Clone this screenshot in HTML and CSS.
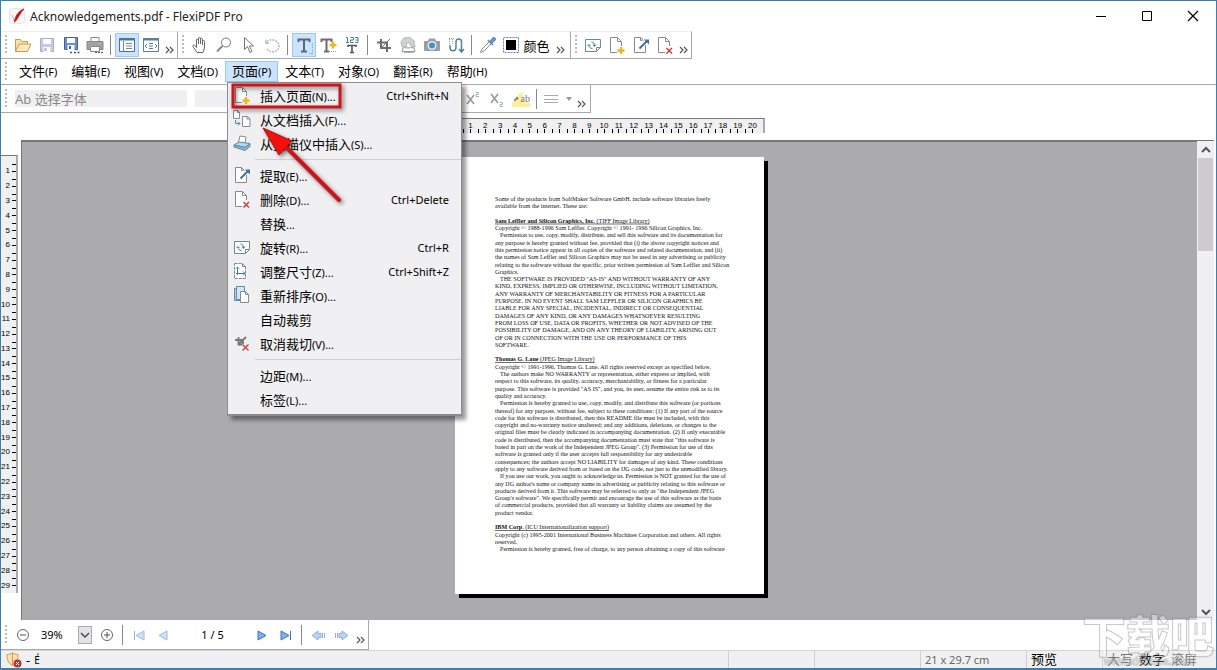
FILE: index.html
```html
<!DOCTYPE html>
<html lang="zh-CN">
<head>
    <meta charset="UTF-8">
    <meta name="viewport" content="width=device-width, initial-scale=1.0">
    <title>Acknowledgements.pdf - FlexiPDF Pro</title>
    <link rel="stylesheet" href="styles.css">
</head>
<body>
    <!-- Shared icons -->
    <svg class="icon-defs" aria-hidden="true">
        <symbol id="page-add" viewBox="0 0 18 18">
            <path d="M9 16.500H2.500V1.500h7l4 4V10" fill="#fff" stroke="#8a8a8a"/>
            <path d="M9.500 1.500v4h4" fill="none" stroke="#8a8a8a"/>
            <path d="M13 11v7M9.500 14.500h7" stroke="#e8b91c" stroke-width="2.400"/>
        </symbol>
        <symbol id="page-extract" viewBox="0 0 18 18">
            <path d="M13.500 9v7.500h-11v-15h6l3 3" fill="#fff" stroke="#8a8a8a"/>
            <path d="M8.500 1.500v3h2" fill="none" stroke="#8a8a8a"/>
            <path d="M7.500 12.500L15 5" stroke="#3f7196" stroke-width="2"/>
            <path d="M12 3.500h5v5z" fill="#3f7196"/>
        </symbol>
        <symbol id="page-delete" viewBox="0 0 18 18">
            <path d="M9 16.500H2.500V1.500h7l4 4V10" fill="#fff" stroke="#8a8a8a"/>
            <path d="M9.500 1.500v4h4" fill="none" stroke="#8a8a8a"/>
            <path d="M10.500 12l5.500 5.500M16 12l-5.500 5.500" stroke="#c94242" stroke-width="1.500"/>
        </symbol>
        <symbol id="rotate" viewBox="0 0 18 18">
            <path d="M1.500 3.500h15v8l-4 4h-11z" fill="#fff" stroke="#6f8a93"/>
            <path d="M12.500 15.500v-4h4" fill="none" stroke="#6f8a93"/>
            <path d="M5 9c0 2.500 1.500 3.500 3.500 3.500M10.500 10c0-2.500-1-4-3-4M3.500 10L5 8.500 6.500 10M9 8.500l1.500 2 1.500-2" fill="none" stroke="#3f7f96"/>
        </symbol>
        <symbol id="crop" viewBox="0 0 18 18">
            <path d="M6 3v9h10M2 6.500h10V16" fill="none" stroke="#6d6d6d" stroke-width="2"/>
            <path d="M6 12l9-9" stroke="#6d6d6d"/>
        </symbol>
        <symbol id="more" viewBox="0 0 10 8">
            <path d="M1 1l3 3-3 3M5 1l3 3-3 3" fill="none" stroke="#555" stroke-width="1.200"/>
        </symbol>
    </svg>

    <div class="window">
        <header class="titlebar">
            <svg class="app-icon" viewBox="0 0 16 16">
                <rect x="0.500" y="0.500" width="15" height="15" rx="3" fill="#f8f6f6" stroke="#e6e2e2"/>
                <path d="M2.500 7c1.500 2 2.500 4 3 7" fill="none" stroke="#d9a0a4"/>
                <path d="M15 1C10 3 6.500 7 5.500 14 8.500 12 10 6 15 1z" fill="#c1121f" stroke="#c1121f"/>
            </svg>
            <h1>Acknowledgements.pdf - FlexiPDF Pro</h1>
            <div class="window-buttons">
                <button aria-label="最小化"><svg viewBox="0 0 12 12"><path d="M1 6.500h10" stroke="#000"/></svg></button>
                <button aria-label="最大化"><svg viewBox="0 0 12 12"><path d="M1.500 1.500h9v9h-9z" fill="none" stroke="#000"/></svg></button>
                <button aria-label="关闭"><svg viewBox="0 0 12 12"><path d="M1 1l10 10M11 1L1 11" stroke="#000" stroke-width="1.200"/></svg></button>
            </div>
        </header>

        <div class="toolbars">
            <div class="toolbar">
                <span class="grip"></span>
                <button aria-label="打开"><svg viewBox="0 0 18 18"><path d="M1.500 15V3.500h5l1.500 2h5.500V8" fill="#f6e2b0" stroke="#c89b4e"/><path d="M1.500 15.500L5 8h12l-3.500 7.500z" fill="#fce9bd" stroke="#c89b4e"/></svg></button>
                <button aria-label="保存"><svg viewBox="0 0 18 18"><path d="M2.500 2.500h13v13h-13z" fill="#c3cbe3" stroke="#a7b0cf"/><path d="M5 3h8v5H5zM5.500 11h7v5h-7z" fill="#fff"/><path d="M6.500 12h2v3h-2z" fill="#a7b0cf"/></svg></button>
                <button aria-label="另存为"><svg viewBox="0 0 18 18"><path d="M2.500 1.500h13v12h-13z" fill="#6f8ccb" stroke="#4a5f96"/><path d="M5 2h8v5H5zM5.500 9h7v5h-7z" fill="#fff"/><path d="M7 10h2v3H7z" fill="#4a5f96"/><path d="M8 16.500h2M12 16.500h2M15.500 16.500h2" stroke="#555" stroke-width="1.500"/></svg></button>
                <button aria-label="打印"><svg viewBox="0 0 18 18"><path d="M5 1.500h8v4H5z" fill="#fff" stroke="#888"/><path d="M1 5.500h16v8H1z" fill="#a2a2a2" stroke="#888"/><path d="M4.500 10.500h9v5h-9z" fill="#fff" stroke="#888"/><path d="M13 7.500h2" stroke="#d9df54"/><path d="M9 16.500h2M12 16.500h2M15 16.500h2" stroke="#555"/></svg></button>
                <span class="divider"></span>
                <button class="active" aria-label="书签栏"><svg viewBox="0 0 18 18"><path d="M1.500 2.500h15v13h-15z" fill="#fff" stroke="#4d7591"/><path d="M1 3.500h16" stroke="#4d7591" stroke-width="2"/><path d="M5.500 5v10M8 7.500h6M8 10h6M8 12.500h6" stroke="#6b8ea6"/></svg></button>
                <button aria-label="适合宽度"><svg viewBox="0 0 18 18"><path d="M1.500 2.500h15v13h-15z" fill="#fff" stroke="#5f7f92"/><path d="M1 3.500h16" stroke="#5f7f92" stroke-width="2"/><path d="M7 7.500h4M7 10h4M7 12.500h4M5 8l-2 2 2 2M13 8l2 2-2 2" fill="none" stroke="#4a7fae"/></svg></button>
                <button class="more" aria-label="更多"><svg><use href="#more"/></svg></button>
            </div>
            <div class="toolbar">
                <span class="grip"></span>
                <button aria-label="手形"><svg viewBox="0 0 18 18"><path d="M6 16.500L2 10.500c-.5-1.500 1-2 2-1l1.500 2V4c0-1.500 2-1.500 2 0v4-5.500c0-1.500 2-1.500 2 0V8 3.500c0-1.500 2-1.500 2 0V9 5.500c0-1.500 2-1.500 2 0V12l-1.500 4.500z" fill="#fff" stroke="#666"/></svg></button>
                <button aria-label="缩放"><svg viewBox="0 0 18 18"><circle cx="11" cy="6.500" r="4.500" fill="#fff" stroke="#777"/><path d="M7.500 10L2 15.500" stroke="#888" stroke-width="2"/></svg></button>
                <button aria-label="选择"><svg viewBox="0 0 18 18"><path d="M5.500 1.500v12l3-3 2.500 6 2-1-2.500-5.500h4z" fill="#fff" stroke="#777"/></svg></button>
                <button aria-label="撤销"><svg viewBox="0 0 18 18"><path d="M4 6c4-5 12-1 12 4 0 6-8 8-12 3" fill="none" stroke="#b4b8bb" stroke-width="1.500" stroke-dasharray="2 1"/><path d="M2 3v5h5z" fill="#b3cbe2"/></svg></button>
                <span class="divider"></span>
                <button class="active" aria-label="编辑文本"><svg viewBox="0 0 18 18"><path d="M3.500 6V3.500h11V6M9 3v12M6 15.500h6" fill="none" stroke="#56697a" stroke-width="2"/><path d="M17.500 7v11M14 17.500h4" stroke="#7fa8cc" stroke-dasharray="1 1"/></svg></button>
                <button aria-label="添加文本"><svg viewBox="0 0 18 18"><path d="M2.500 6V3.500h10V6M7.500 3v12M5 15.500h5" fill="none" stroke="#6d6d6d" stroke-width="2"/><path d="M14 5.500v7M10.500 9h7" stroke="#e8b91c" stroke-width="2.400"/><path d="M10 15.500h7" stroke="#7fa8cc" stroke-dasharray="1 1"/></svg></button>
                <button aria-label="编号"><svg viewBox="0 0 18 18"><path d="M3 1.500h1.500v5M3 6.500h3M7.500 1.500h3v2.500h-3v2.500h3M12 1.500h3v5h-3M12.500 4H15" fill="none" stroke="#4a8199"/><path d="M5 11V9.500h8V11M9 9v7M7 16.500h4" fill="none" stroke="#555" stroke-width="1.600"/></svg></button>
                <span class="divider"></span>
                <button aria-label="裁剪"><svg><use href="#crop"/></svg></button>
                <button aria-label="图章"><svg viewBox="0 0 18 18"><path d="M3 11L2 6l3-4 6-.5 4 3.500 1 6-4-1-2-3.500-3 1 1 3.500z" fill="#cfd3d6" stroke="#b4b4b4"/><path d="M4 12c2-1 3 0 5 0s3-1 6 0l1 3.500H3z" fill="#fff" stroke="#999"/><path d="M5 16.500h10" stroke="#8dbad8"/></svg></button>
                <button aria-label="快照"><svg viewBox="0 0 18 18"><path d="M1 5h4l1-2.500h6L13 5h4v10H1z" fill="#9c9fa2"/><circle cx="9" cy="9.500" r="4.500" fill="#d8eaf5"/><circle cx="9" cy="9.500" r="3" fill="#4d90bd"/></svg></button>
                <button aria-label="连接"><svg viewBox="0 0 18 18"><path d="M3 9v2c0 5 6 5 6 0V6c0-4 5.500-4 5.500 0v9M12 13l2.500 3 2.500-3" fill="none" stroke="#5580a0" stroke-width="1.500"/><path d="M2 2.500h5M2.500 3v6M5.500 3v6" stroke="#7fa3bd" stroke-dasharray="1 1"/></svg></button>
                <span class="divider"></span>
                <button aria-label="吸管"><svg viewBox="0 0 18 18"><path d="M10 6L3 13l-1.500 3.500L5 15l7-7" fill="#fff" stroke="#8a8a8a"/><path d="M9 4l5 5M11 6l3-4c1-1 3 1 2 2l-4 3.500z" fill="#7c9fd0" stroke="#6688bd" stroke-width="1.600"/></svg></button>
                <button class="color-button"><svg viewBox="0 0 18 18"><path d="M1.500 1.500h15v15h-15z" fill="#fff" stroke="#5f83c4" stroke-dasharray="2 1"/><path d="M4 4h10v10H4z" fill="#000"/></svg><span>颜色</span></button>
                <button class="more wide" aria-label="更多"><svg><use href="#more"/></svg></button>
            </div>
            <div class="toolbar">
                <span class="grip"></span>
                <button aria-label="旋转页面"><svg><use href="#rotate"/></svg></button>
                <button aria-label="插入页面"><svg><use href="#page-add"/></svg></button>
                <button aria-label="提取页面"><svg><use href="#page-extract"/></svg></button>
                <button aria-label="删除页面"><svg><use href="#page-delete"/></svg></button>
                <button class="more" aria-label="更多"><svg><use href="#more"/></svg></button>
            </div>
        </div>

        <nav class="menubar">
            <span class="grip"></span>
            <button>文件<small>(F)</small></button>
            <button>编辑<small>(E)</small></button>
            <button>视图<small>(V)</small></button>
            <button>文档<small>(D)</small></button>
            <div class="menu-open">
                <button class="active">页面<small>(P)</small></button>
                <div class="dropdown">
                    <button><svg><use href="#page-add"/></svg><span>插入页面<small>(N)...</small></span><kbd>Ctrl+Shift+N</kbd></button>
                    <button><svg viewBox="0 0 18 18"><path d="M.5.500h4l2 2v6h-6zM9.500 6.500h5l2.500 2.500v7.500H9.500z" fill="#fff" stroke="#8a8a8a"/><path d="M4.500.500v2h2M14 6.500V9h3" fill="none" stroke="#8a8a8a"/><path d="M2.500 10v3.500H7M5 11.500l2 2-2 2" fill="none" stroke="#4f8aae"/></svg><span>从文档插入<small>(F)...</small></span></button>
                    <button><svg viewBox="0 0 18 18"><path d="M5 10l2-8 6 1-1 7z" fill="#fff" stroke="#8a8a8a"/><path d="M1 11l5-3 11 1.500-5 4z" fill="#b5d6ec" stroke="#5f87a5"/><path d="M1 11v2l11 3.500 5-4v-3l-5 4z" fill="#8fb6d2" stroke="#5f87a5"/></svg><span>从扫描仪中插入<small>(S)...</small></span></button>
                    <hr>
                    <button><svg><use href="#page-extract"/></svg><span>提取<small>(E)...</small></span></button>
                    <button><svg><use href="#page-delete"/></svg><span>删除<small>(D)...</small></span><kbd>Ctrl+Delete</kbd></button>
                    <button class="no-icon"><span>替换<small>...</small></span></button>
                    <button><svg><use href="#rotate"/></svg><span>旋转<small>(R)...</small></span><kbd>Ctrl+R</kbd></button>
                    <button><svg viewBox="0 0 18 18"><path d="M1.500 1.500h8l3 3v12h-11z" fill="#fff" stroke="#6f8a93" stroke-dasharray="3 1"/><path d="M9.500 1.500v3h3" fill="none" stroke="#6f8a93"/><path d="M4.500 5v8M3 6.500L4.500 5 6 6.500M3 11.500h9M10 9.500l2 2-2 2" fill="none" stroke="#3f7f96"/></svg><span>调整尺寸<small>(Z)...</small></span><kbd>Ctrl+Shift+Z</kbd></button>
                    <button><svg viewBox="0 0 18 18"><path d="M1.500 2.500h8v12h-8z" fill="#b9cfe6" stroke="#6688a8"/><path d="M3.500.500h8v13h-8z" fill="#d7e5f3" stroke="#6688a8"/><path d="M7.500 5.500h5l3 3v8h-8z" fill="#fff" stroke="#8a8a8a"/><path d="M12.500 5.500v3h3" fill="none" stroke="#8a8a8a"/></svg><span>重新排序<small>(O)...</small></span></button>
                    <button class="no-icon"><span>自动裁剪</span></button>
                    <button><svg viewBox="0 0 18 18"><path d="M5.500 3v7.500H9M2 6h8v4M5 11l8-8" fill="none" stroke="#777" stroke-width="1.800"/><path d="M9.500 10.500l6 6M15.500 10.500l-6 6" stroke="#c94242" stroke-width="1.400"/></svg><span>取消裁切<small>(V)...</small></span></button>
                    <hr>
                    <button class="no-icon"><span>边距<small>(M)...</small></span></button>
                    <button class="no-icon"><span>标签<small>(L)...</small></span></button>
                    <svg class="callout" viewBox="0 0 130 130">
                        <rect x="5" y="2" width="107" height="22" fill="none" stroke="#cb1518" stroke-width="3"/>
                        <path d="M111 117L58 64" stroke="#cb1518" stroke-width="4" stroke-linecap="round"/>
                        <path d="M35 45l29 13-13 14z" fill="#f3100c" stroke="#a81212"/>
                    </svg>
                </div>
            </div>
            <button>文本<small>(T)</small></button>
            <button>对象<small>(O)</small></button>
            <button>翻译<small>(R)</small></button>
            <button>帮助<small>(H)</small></button>
        </nav>

        <div class="formatbar">
            <span class="grip"></span>
            <input class="font-name" type="text" aria-label="字体" placeholder="Ab 选择字体" disabled>
            <input class="font-size" type="text" aria-label="字号" disabled>
            <button aria-label="上标"><svg viewBox="0 0 18 18"><path d="M3 5l7 9M10 5l-7 9" stroke="#999" stroke-width="1.600"/><path d="M12 2.500h2.500v2H12v2h3" fill="none" stroke="#9db6cc"/></svg></button>
            <button aria-label="下标"><svg viewBox="0 0 18 18"><path d="M3 4l7 9M10 4l-7 9" stroke="#999" stroke-width="1.600"/><path d="M12 12.500h2.500v2H12v2h3" fill="none" stroke="#9db6cc"/></svg></button>
            <button class="highlight" aria-label="突出显示"><svg viewBox="0 0 18 18"><path d="M0 12.500h18V17H0zM1 12.500l7-10 3 1v9z" fill="#fbf097"/><path d="M2 9.500l3-3 2 2-5 3z" fill="#888"/></svg><span>ab</span></button>
            <span class="divider"></span>
            <button class="align" aria-label="对齐"><svg viewBox="0 0 30 18"><path d="M1 5.500h14M1 9.500h14M1 12.500h14" stroke="#aaa"/><path d="M23 7h6l-3 4z" fill="#999"/></svg></button>
            <button class="more" aria-label="更多"><svg><use href="#more"/></svg></button>
        </div>

        <div class="ruler-row">
            <div class="ruler ruler-top" id="rulerTop"></div>
        </div>

        <main class="workspace">
            <div class="side">
                <div class="ruler ruler-left" id="rulerLeft"></div>
            </div>
            <div class="canvas">
                <!-- Page at 39% zoom, ten units to the pixel -->
                <svg class="page" viewBox="0 0 3090 4370">
                    <text y="438">
                        <tspan x="400">Some of the products from SoftMaker Software GmbH. include software libraries freely</tspan>
                        <tspan x="400" dy="73">available from the internet. These are:</tspan>
                        <tspan x="400" dy="146" class="heading"><tspan class="bold">Sam Leffler and Silicon Graphics, Inc. </tspan> (TIFF Image Library)</tspan>
                        <tspan x="400" dy="73">Copyright © 1988-1996 Sam Leffler. Copyright © 1991- 1996 Silicon Graphics, Inc.</tspan>
                        <tspan x="450" dy="73">Permission to use, copy, modify, distribute, and sell this software and its documentation for</tspan>
                        <tspan x="400" dy="73">any purpose is hereby granted without fee, provided that (i) the above copyright notices and</tspan>
                        <tspan x="400" dy="73">this permission notice appear in all copies of the software and related documentation, and (ii)</tspan>
                        <tspan x="400" dy="73">the names of Sam Leffler and Silicon Graphics may not be used in any advertising or publicity</tspan>
                        <tspan x="400" dy="73">relating to the software without the specific, prior written permission of Sam Leffler and Silicon</tspan>
                        <tspan x="400" dy="73">Graphics.</tspan>
                        <tspan x="450" dy="73">THE SOFTWARE IS PROVIDED "AS-IS" AND WITHOUT WARRANTY OF ANY</tspan>
                        <tspan x="400" dy="73">KIND, EXPRESS, IMPLIED OR OTHERWISE, INCLUDING WITHOUT LIMITATION,</tspan>
                        <tspan x="400" dy="73">ANY WARRANTY OF MERCHANTABILITY OR FITNESS FOR A PARTICULAR</tspan>
                        <tspan x="400" dy="73">PURPOSE.  IN NO EVENT SHALL SAM LEFFLER OR SILICON GRAPHICS BE</tspan>
                        <tspan x="400" dy="73">LIABLE FOR ANY SPECIAL, INCIDENTAL, INDIRECT OR CONSEQUENTIAL</tspan>
                        <tspan x="400" dy="73">DAMAGES OF ANY KIND, OR ANY DAMAGES WHATSOEVER RESULTING</tspan>
                        <tspan x="400" dy="73">FROM LOSS OF USE, DATA OR PROFITS, WHETHER OR NOT ADVISED OF THE</tspan>
                        <tspan x="400" dy="73">POSSIBILITY OF DAMAGE, AND ON ANY THEORY OF LIABILITY, ARISING OUT</tspan>
                        <tspan x="400" dy="73">OF OR IN CONNECTION WITH THE USE OR PERFORMANCE OF THIS</tspan>
                        <tspan x="400" dy="73">SOFTWARE.</tspan>
                        <tspan x="400" dy="146" class="heading"><tspan class="bold">Thomas G. Lane </tspan> (JPEG Image Library)</tspan>
                        <tspan x="400" dy="73">Copyright © 1991-1996, Thomas G. Lane.  All rights reserved except as specified below.</tspan>
                        <tspan x="450" dy="73">The authors make NO WARRANTY or representation, either express or implied, with</tspan>
                        <tspan x="400" dy="73">respect to this software, its quality, accuracy, merchantability, or fitness for a particular</tspan>
                        <tspan x="400" dy="73">purpose.  This software is provided "AS IS", and you, its user, assume the entire risk as to its</tspan>
                        <tspan x="400" dy="73">quality and accuracy.</tspan>
                        <tspan x="450" dy="73">Permission is hereby granted to use, copy, modify, and distribute this software (or portions</tspan>
                        <tspan x="400" dy="73">thereof) for any purpose, without fee, subject to these conditions: (1) If any part of the source</tspan>
                        <tspan x="400" dy="73">code for this software is distributed, then this README file must be included, with this</tspan>
                        <tspan x="400" dy="73">copyright and no-warranty notice unaltered; and any additions, deletions, or changes to the</tspan>
                        <tspan x="400" dy="73">original files must be clearly indicated in accompanying documentation. (2) If only executable</tspan>
                        <tspan x="400" dy="73">code is distributed, then the accompanying documentation must state that "this software is</tspan>
                        <tspan x="400" dy="73">based in part on the work of the Independent JPEG Group". (3) Permission for use of this</tspan>
                        <tspan x="400" dy="73">software is granted only if the user accepts full responsibility for any undesirable</tspan>
                        <tspan x="400" dy="73">consequences; the authors accept NO LIABILITY for damages of any kind. These conditions</tspan>
                        <tspan x="400" dy="73">apply to any software derived from or based on the IJG code, not just to the unmodified library.</tspan>
                        <tspan x="450" dy="73">If you use our work, you ought to acknowledge us. Permission is NOT granted for the use of</tspan>
                        <tspan x="400" dy="73">any IJG author's name or company name in advertising or publicity relating to this software or</tspan>
                        <tspan x="400" dy="73">products derived from it.  This software may be referred to only as "the Independent JPEG</tspan>
                        <tspan x="400" dy="73">Group's software". We specifically permit and encourage the use of this software as the basis</tspan>
                        <tspan x="400" dy="73">of commercial products, provided that all warranty or liability claims are assumed by the</tspan>
                        <tspan x="400" dy="73">product vendor.</tspan>
                        <tspan x="400" dy="146" class="heading"><tspan class="bold">IBM Corp. </tspan> (ICU Internationalization support)</tspan>
                        <tspan x="400" dy="73">Copyright (c) 1995-2001 International Business Machines Corporation and others. All rights</tspan>
                        <tspan x="400" dy="73">reserved.</tspan>
                        <tspan x="450" dy="73">Permission is hereby granted, free of charge, to any person obtaining a copy of this software</tspan>
                    </text>
                </svg>
            </div>
            <div class="scrollbar">
                <button aria-label="向上滚动"><svg viewBox="0 0 10 8"><path d="M1 6l4-4 4 4" fill="none" stroke="#555" stroke-width="2"/></svg></button>
                <div class="track"><div class="thumb"></div></div>
                <button aria-label="向下滚动"><svg viewBox="0 0 10 8"><path d="M1 2l4 4 4-4" fill="none" stroke="#555" stroke-width="2"/></svg></button>
            </div>
        </main>

        <div class="navbar">
            <span class="grip"></span>
            <button aria-label="缩小"><svg viewBox="0 0 18 18"><circle cx="9" cy="9" r="5.500" fill="#fff" stroke="#666"/><path d="M6 9h6" stroke="#555"/></svg></button>
            <label class="zoom-value" for="zoomButton">39%</label>
            <button class="zoom-select" id="zoomButton"><svg viewBox="0 0 10 8"><path d="M1 2l4 4 4-4" fill="none" stroke="#444" stroke-width="1.400"/></svg></button>
            <button aria-label="放大"><svg viewBox="0 0 18 18"><circle cx="9" cy="9" r="5.500" fill="#fff" stroke="#666"/><path d="M6 9h6M9 6v6" stroke="#555"/></svg></button>
            <span class="divider"></span>
            <button aria-label="第一页"><svg viewBox="0 0 18 18"><path d="M4.500 5v9" stroke="#8fb0dd"/><path d="M14 5v9L6 9.500z" fill="#cfe0f7" stroke="#9dbbe3"/></svg></button>
            <button aria-label="上一页"><svg viewBox="0 0 18 18"><path d="M13 5v9L5 9.500z" fill="#cfe0f7" stroke="#9dbbe3"/></svg></button>
            <span class="page-number">1 / 5</span>
            <button aria-label="下一页"><svg viewBox="0 0 18 18"><path d="M5 5v9l8-4.500z" fill="#7fb0f2" stroke="#3d72c4"/></svg></button>
            <button aria-label="最后一页"><svg viewBox="0 0 18 18"><path d="M4 5v9l8-4.500z" fill="#7fb0f2" stroke="#3d72c4"/><path d="M13.500 5v9" stroke="#3d72c4"/></svg></button>
            <span class="divider"></span>
            <button aria-label="后退"><svg viewBox="0 0 18 18"><path d="M3 9.500L9 5v2.500h3v4H9V14z" fill="#b9d2f4" stroke="#8fb0dd"/><path d="M13.500 7v5M15.500 7v5" stroke="#8fb0dd"/></svg></button>
            <button aria-label="前进"><svg viewBox="0 0 18 18"><path d="M15 9.500L9 5v2.500H6v4h3V14z" fill="#b9d2f4" stroke="#8fb0dd"/><path d="M4.500 7v5M2.500 7v5" stroke="#8fb0dd"/></svg></button>
            <button class="more" aria-label="更多"><svg><use href="#more"/></svg></button>
        </div>

        <footer class="statusbar">
            <div class="status-main">
                <svg viewBox="0 0 16 16"><path d="M1 2.500c2 0 4-.5 5.500-2 1.500 1.500 3.500 2 5.500 2 0 5-1 9-5.500 11C2 11.500 1 7.500 1 2.500z" fill="#fbe3ad" stroke="#d39a55"/><path d="M6.500 1v12" stroke="#d39a55"/><circle cx="11.500" cy="11.500" r="4" fill="#cc2f2f"/><path d="M10 10l3 3M13 10l-3 3" stroke="#fff"/></svg>
                <span>-</span>
                <span class="status-mark">É</span>
            </div>
            <div class="status-cell cell-small"></div>
            <div class="status-cell cell-medium"></div>
            <div class="status-cell cell-medium">21 x 29.7 cm</div>
            <div class="status-cell cell-preview">预览</div>
            <div class="status-cell cell-keys"><span>大写</span><span class="on">数字</span><span>滚屏</span></div>
        </footer>

        <div class="watermark" aria-hidden="true">
            <div class="watermark-name">下载吧</div>
            <div class="watermark-url">www.xiazaiba.com</div>
        </div>
    </div>

    <script>
        // One cell per centimetre, with half and full centimetre ticks
        function buildRuler(id, count) {
            const ruler = document.getElementById(id);
            for (let i = 1; i <= count; i++) {
                const cell = document.createElement('span');
                cell.textContent = i;
                ruler.appendChild(cell);
            }
        }

        buildRuler('rulerTop', 20);
        buildRuler('rulerLeft', 29);
    </script>
</body>
</html>
```
FILE: styles.css
```css
* {
    margin: 0;
    padding: 0;
    box-sizing: border-box;
}

body {
    font-family: "Noto Sans", "Noto Sans CJK SC", sans-serif;
    font-size: 13px;
    color: #000;
    background: #fff;
}

button {
    font: inherit;
    color: inherit;
    background: none;
    border: none;
}

svg {
    display: block;
    flex: none;
}

.icon-defs {
    position: absolute;
    width: 0;
    height: 0;
}

.window {
    position: relative;
    display: flex;
    flex-direction: column;
    height: 100vh;
    border: 1px solid #3a7fb0;
    border-bottom-width: 2px;
    overflow: hidden;
}

/* Title bar */
.titlebar {
    display: flex;
    align-items: center;
    height: 30px;
    padding-left: 8px;
}

.app-icon {
    width: 16px;
    height: 16px;
    margin-right: 5px;
}

.titlebar h1 {
    flex: 1;
    font-size: 12px;
    font-weight: 400;
    color: #222;
}

.window-buttons {
    display: flex;
}

.window-buttons button {
    display: flex;
    align-items: center;
    justify-content: center;
    width: 46px;
    height: 28px;
}

.window-buttons svg {
    width: 12px;
    height: 12px;
}

/* Toolbars */
.toolbars {
    display: flex;
    height: 28px;
}

.toolbar {
    display: flex;
    align-items: center;
    border-top: 1px solid #eee;
    border-right: 1px solid #a9a9a9;
    border-bottom: 1px solid #a9a9a9;
}

.toolbar button,
.formatbar button,
.navbar button {
    display: flex;
    align-items: center;
    justify-content: center;
    width: 24px;
    height: 24px;
}

.toolbar svg,
.navbar svg {
    width: 18px;
    height: 18px;
}

.toolbar button.active {
    background: #cce4fb;
    border: 1px solid #9ac8ee;
}

.toolbar .color-button {
    width: 52px;
    gap: 3px;
}

.toolbar .more,
.formatbar .more,
.navbar .more {
    width: 14px;
    align-items: flex-end;
    padding-bottom: 3px;
}

.toolbar .more.wide {
    width: 18px;
}

.more svg {
    width: 10px;
    height: 8px;
}

.grip {
    flex: none;
    width: 2px;
    height: 20px;
    margin: 0 4px;
    background: repeating-linear-gradient(#bbb 0 2px, #fff 2px 4px);
}

.divider {
    flex: none;
    width: 1px;
    height: 20px;
    margin: 0 4px 0 3px;
    background: #888;
}

/* Menu bar */
.menubar {
    display: flex;
    align-items: center;
    height: 26px;
    border-bottom: 1px solid #a9a9a9;
}

.menubar .grip {
    margin-right: 5px;
}

.menubar > button,
.menu-open > button {
    height: 21px;
    padding: 0 7px;
    line-height: 19px;
    white-space: nowrap;
}

.menubar small {
    font-size: 11px;
}

.menu-open {
    position: relative;
}

.menu-open > .active {
    padding: 0 6px;
    background: #cce4fb;
    border: 1px solid #9ac8ee;
}

.dropdown {
    position: absolute;
    top: 21px;
    left: 2px;
    z-index: 10;
    width: 235px;
    padding: 0 0 3px;
    background: #f0eff1;
    border: 1px solid #8c8c8c;
    border-bottom-width: 2px;
    box-shadow: 4px 4px 4px rgba(0, 0, 0, 0.4);
}

.dropdown button {
    display: flex;
    align-items: center;
    width: 100%;
    height: 24px;
    padding: 0 12px 0 5px;
    text-align: left;
}

.dropdown button svg {
    width: 18px;
    height: 18px;
    margin-right: 9px;
}

.dropdown .no-icon {
    padding-left: 32px;
}

.dropdown button span {
    flex: 1;
}

.dropdown kbd {
    font-family: inherit;
    font-size: 11px;
}

.dropdown hr {
    height: 1px;
    margin: 4px 0 3px 27px;
    border: none;
    background: #d0cfd1;
}

.callout {
    position: absolute;
    top: 0;
    left: 0;
    width: 130px;
    height: 130px;
    filter: drop-shadow(2px 2px 2px rgba(0, 0, 0, 0.5));
}

/* Format bar */
.formatbar {
    display: flex;
    align-items: center;
    width: 590px;
    height: 28px;
    border-right: 1px solid #a9a9a9;
    border-bottom: 1px solid #a9a9a9;
}

.formatbar input {
    height: 17px;
    background: #f0eff1;
    border: none;
    font: inherit;
}

.formatbar input::placeholder {
    color: #888;
    opacity: 1;
}

.font-name {
    width: 172px;
    margin: 0 8px 0 4px;
}

.font-size {
    flex: 1;
    margin-right: 4px;
}

.formatbar svg {
    width: 18px;
    height: 18px;
}

.formatbar .highlight {
    position: relative;
    font: 10px "Liberation Serif", serif;
    color: #777;
}

.highlight span {
    position: absolute;
    right: 3px;
    top: 6px;
}

.formatbar .align {
    width: 33px;
}

.formatbar .align svg {
    width: 30px;
}

.formatbar .more {
    width: 16px;
}

.formatbar .more svg {
    width: 10px;
    height: 8px;
}

/* Rulers */
.ruler-row {
    display: flex;
    justify-content: center;
    height: 27px;
    padding: 5px 19px 0 22px;
}

.ruler {
    display: grid;
    background-color: #f0eff1;
    font: 8px/10px "Liberation Sans", sans-serif;
}

.ruler-top {
    grid-template-columns: repeat(20, 1fr);
    width: 310px;
    height: 15px;
    padding: 2px 3px 0 8px;
    border-top: 1px solid #777;
    border-right: 2px solid #aaa;
    text-align: center;
}

.ruler-top span {
    height: 12px;
    background: linear-gradient(#000, #000) left bottom / 1px 4px no-repeat, linear-gradient(#000, #000) center bottom / 1px 4px no-repeat;
}

.ruler-left {
    grid-template-rows: repeat(29, 1fr);
    width: 17px;
    height: 438px;
    padding-top: 8px;
    border-top: 1px solid #777;
    border-right: 2px solid #aaa;
}

.ruler-left span {
    display: flex;
    align-items: center;
    justify-content: flex-end;
    padding-right: 6px;
    background: linear-gradient(#000, #000) right top / 4px 1px no-repeat, linear-gradient(#000, #000) right center / 4px 1px no-repeat;
}

/* Document area */
.workspace {
    display: flex;
    flex: 1;
    min-height: 0;
}

.side {
    width: 20px;
    padding-top: 15px;
}

.canvas {
    flex: 1;
    display: flex;
    justify-content: center;
    align-items: flex-start;
    padding-top: 15px;
    background: #abaaac;
    border-top: 2px solid #77767a;
    border-left: 1px solid #77767a;
    overflow: hidden;
}

.page {
    width: 309px;
    height: 437px;
    background: #fff;
    box-shadow: 4px 4px 0 #000;
}

.page text {
    font-family: "Liberation Serif", serif;
    font-size: 61px;
    fill: #111;
}

.page .heading {
    text-decoration: underline;
}

.page .bold {
    font-weight: 700;
}

.scrollbar {
    display: flex;
    flex-direction: column;
    width: 17px;
    margin-right: 2px;
    padding: 0 1px;
    background: #f0eff1;
    border-top: 1px solid #77767a;
}

.scrollbar button {
    display: flex;
    align-items: center;
    justify-content: center;
    height: 17px;
}

.scrollbar svg {
    width: 10px;
    height: 8px;
}

.track {
    flex: 1;
}

.thumb {
    height: 21%;
    background: #cdcbce;
}

/* Page navigation */
.navbar {
    display: flex;
    align-items: center;
    align-self: flex-start;
    height: 30px;
    border-right: 1px solid #a9a9a9;
    border-bottom: 1px solid #a9a9a9;
}

.zoom-value {
    width: 43px;
    padding-left: 6px;
    font-size: 11px;
}

.navbar .zoom-select {
    width: 14px;
    height: 18px;
    margin-right: 3px;
    background: #e3e2e4;
    border: 1px solid #aaa;
}

.zoom-select svg {
    width: 10px;
    height: 8px;
}

.page-number {
    width: 75px;
    font-size: 11px;
    text-align: center;
}

.navbar .more svg {
    width: 10px;
    height: 8px;
}

/* Status bar */
.statusbar {
    display: flex;
    align-items: center;
    height: 18px;
    background: #f0eff1;
    border-top: 1px solid #d5d4d6;
}

.status-main {
    display: flex;
    flex: 1;
    align-items: center;
    gap: 4px;
    padding-left: 5px;
    line-height: 16px;
}

.status-main svg {
    width: 16px;
    height: 16px;
}

.status-mark {
    font-size: 10px;
}

.status-cell {
    height: 17px;
    padding-left: 4px;
    border-left: 1px solid #cfced0;
    line-height: 17px;
    white-space: nowrap;
}

.cell-small {
    width: 86px;
}

.cell-medium {
    width: 106px;
    font-size: 11px;
    color: #666;
}

.cell-preview {
    width: 76px;
}

.cell-keys {
    display: flex;
    gap: 6px;
    width: 114px;
    color: #777;
}

.cell-keys .on {
    color: #000;
}

.watermark {
    position: absolute;
    right: 2px;
    bottom: 0;
    opacity: 0.4;
    pointer-events: none;
    text-align: center;
}

.watermark-name {
    font: 900 44px/44px "Noto Sans CJK SC", sans-serif;
    color: #fff;
    -webkit-text-stroke: 1px #777;
}

.watermark-url {
    font: 700 10px/12px "Liberation Sans", sans-serif;
    color: #fff;
    -webkit-text-stroke: 1px #999;
}
```
